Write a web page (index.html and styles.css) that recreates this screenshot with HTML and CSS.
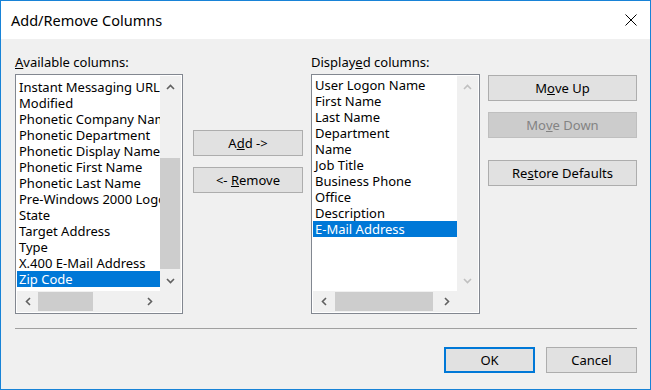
FILE: index.html
```html
<!DOCTYPE html>
<html>
<head>
<meta charset="utf-8">
<link rel="stylesheet" href="styles.css">
</head>
<body>
<div class="win">
  <div class="titlebar">
    <span class="title">Add/Remove Columns</span>
    <svg class="close" width="12" height="12" viewBox="0 0 12 12"><path d="M0.5 0.5 L11.5 11.5 M11.5 0.5 L0.5 11.5" stroke="#000" stroke-width="1" fill="none"/></svg>
  </div>
  <div class="body">
    <div class="main">
      <div class="col-list">
        <div class="label"><u>A</u>vailable columns:</div>
        <div class="listbox lb-left">
          <div class="items items-left">
            <div class="item">Instant Messaging URL</div>
            <div class="item">Modified</div>
            <div class="item">Phonetic Company Name</div>
            <div class="item">Phonetic Department</div>
            <div class="item">Phonetic Display Name</div>
            <div class="item">Phonetic First Name</div>
            <div class="item">Phonetic Last Name</div>
            <div class="item">Pre-Windows 2000 Logon Name</div>
            <div class="item">State</div>
            <div class="item">Target Address</div>
            <div class="item">Type</div>
            <div class="item">X.400 E-Mail Address</div>
            <div class="item selected">Zip Code</div>
          </div>
          <div class="vscroll">
            <div class="sbtn"><svg width="9" height="6" viewBox="0 0 9 6"><polyline points="1,5 4.5,1.5 8,5" class="chev"/></svg></div>
            <div class="vtrack"><div class="vthumb vthumb-left"></div></div>
            <div class="sbtn"><svg width="9" height="6" viewBox="0 0 9 6"><polyline points="1,1 4.5,4.5 8,1" class="chev"/></svg></div>
          </div>
          <div class="hscroll">
            <div class="sbtn"><svg width="6" height="9" viewBox="0 0 6 9"><polyline points="5,1 1.5,4.5 5,8" class="chev"/></svg></div>
            <div class="htrack"><div class="hthumb hthumb-left"></div></div>
            <div class="sbtn"><svg width="6" height="9" viewBox="0 0 6 9"><polyline points="1,1 4.5,4.5 1,8" class="chev"/></svg></div>
          </div>
          <div class="corner"></div>
        </div>
      </div>

      <div class="col-mid">
        <div class="btn mid-btn">A<u>d</u>d -&gt;</div>
        <div class="btn mid-btn">&lt;-&nbsp;<u>R</u>emove</div>
      </div>

      <div class="col-list">
        <div class="label">Display<u>e</u>d columns:</div>
        <div class="listbox lb-right">
          <div class="items items-right">
            <div class="item">User Logon Name</div>
            <div class="item">First Name</div>
            <div class="item">Last Name</div>
            <div class="item">Department</div>
            <div class="item">Name</div>
            <div class="item">Job Title</div>
            <div class="item">Business Phone</div>
            <div class="item">Office</div>
            <div class="item">Description</div>
            <div class="item selected">E-Mail Address</div>
          </div>
          <div class="vscroll">
            <div class="sbtn"><svg width="9" height="6" viewBox="0 0 9 6"><polyline points="1,5 4.5,1.5 8,5" class="chev dis"/></svg></div>
            <div class="vtrack"></div>
            <div class="sbtn"><svg width="9" height="6" viewBox="0 0 9 6"><polyline points="1,1 4.5,4.5 8,1" class="chev dis"/></svg></div>
          </div>
          <div class="hscroll">
            <div class="sbtn"><svg width="6" height="9" viewBox="0 0 6 9"><polyline points="5,1 1.5,4.5 5,8" class="chev"/></svg></div>
            <div class="htrack"><div class="hthumb hthumb-right"></div></div>
            <div class="sbtn"><svg width="6" height="9" viewBox="0 0 6 9"><polyline points="1,1 4.5,4.5 1,8" class="chev"/></svg></div>
          </div>
          <div class="corner"></div>
        </div>
      </div>

      <div class="col-btns">
        <div class="btn side-btn">M<u>o</u>ve Up</div>
        <div class="btn side-btn disabled">Mo<u>v</u>e Down</div>
        <div class="btn side-btn restore">Re<u>s</u>tore Defaults</div>
      </div>
    </div>
    <div class="sep"></div>
    <div class="footer">
      <div class="btn foot-btn default">OK</div>
      <div class="btn foot-btn">Cancel</div>
    </div>
  </div>
</div>
</body>
</html>
```

FILE: styles.css
```css
html, body {
  margin: 0;
  padding: 0;
}
body {
  font-family: "Noto Sans", "Open Sans", "DejaVu Sans", sans-serif;
  font-size: 13px;
  color: #000;
  background: #f0f0f0;
}
.win {
  width: 651px;
  height: 390px;
  box-sizing: border-box;
  border: 1px solid #1883d7;
  background: #f0f0f0;
  display: flex;
  flex-direction: column;
}
.titlebar {
  height: 38px;
  background: #fff;
  display: flex;
  align-items: center;
  justify-content: space-between;
  padding: 0 13px 0 10px;
}
.title {
  font-size: 14.5px;
  line-height: 20px;
  margin-top: -1px;
}
.close {
  display: block;
}
.body {
  flex: 1;
  padding: 14px 13px 0 14px;
  display: flex;
  flex-direction: column;
}
.main {
  display: flex;
  align-items: flex-start;
}
.col-list {
  display: flex;
  flex-direction: column;
}
.label {
  line-height: 18px;
  height: 18px;
  margin-bottom: 3px;
  white-space: nowrap;
}
.listbox {
  height: 240px;
  box-sizing: border-box;
  border: 1px solid #828790;
  padding: 1px;
  background: #fff;
  display: grid;
  grid-template-columns: 1fr 21px;
  grid-template-rows: 1fr 21px;
}
.lb-left { width: 168px; }
.lb-right { width: 169px; }
.items {
  overflow: hidden;
  min-width: 0;
}
.items-left { padding-top: 3px; }
.items-right { padding-top: 1px; }
.item {
  height: 16px;
  line-height: 16px;
  padding-left: 2px;
  white-space: nowrap;
  overflow: hidden;
}
.item.selected {
  background: #0078d7;
  color: #fff;
}
.vscroll {
  background: #f0f0f0;
  display: flex;
  flex-direction: column;
}
.hscroll {
  background: #f0f0f0;
  display: flex;
}
.corner {
  background: #f0f0f0;
}
.sbtn {
  width: 21px;
  height: 21px;
  flex: none;
  display: flex;
  align-items: center;
  justify-content: center;
}
.sbtn svg { display: block; }
.chev {
  fill: none;
  stroke: #606060;
  stroke-width: 1.6;
}
.chev.dis { stroke: #c0c0c0; }
.vtrack {
  flex: 1;
  display: flex;
  flex-direction: column;
  justify-content: flex-end;
  padding-bottom: 1px;
}
.vthumb {
  background: #cdcdcd;
  margin: 0 1px 0 0;
}
.vthumb-left { height: 111px; }
.htrack {
  flex: 1;
  display: flex;
  align-items: stretch;
  padding: 1px 0;
}
.hthumb {
  background: #cdcdcd;
}
.hthumb-left { width: 55px; }
.hthumb-right { width: 98px; margin-left: 1px; }

.btn {
  box-sizing: border-box;
  height: 26px;
  background: #e1e1e1;
  border: 1px solid #adadad;
  display: flex;
  align-items: center;
  justify-content: center;
  white-space: nowrap;
  line-height: 16px;
}
.btn.disabled {
  background: #cccccc;
  border-color: #bfbfbf;
  color: #838383;
}
.btn.default {
  border: 2px solid #0078d7;
}
.col-mid {
  margin-left: 10px;
  margin-top: 77px;
  display: flex;
  flex-direction: column;
  gap: 11px;
}
.mid-btn { width: 110px; }
.col-mid + .col-list { margin-left: 8px; }
.col-btns {
  margin-left: 8px;
  margin-top: 22px;
  display: flex;
  flex-direction: column;
  gap: 11px;
}
.side-btn { width: 149px; }
.side-btn.restore { margin-top: 11px; }
.sep {
  margin-top: 14px;
  height: 1px;
  background: #a0a0a0;
}
.footer {
  margin-top: 18px;
  display: flex;
  justify-content: flex-end;
  gap: 11px;
}
.foot-btn { width: 91px; }
```
